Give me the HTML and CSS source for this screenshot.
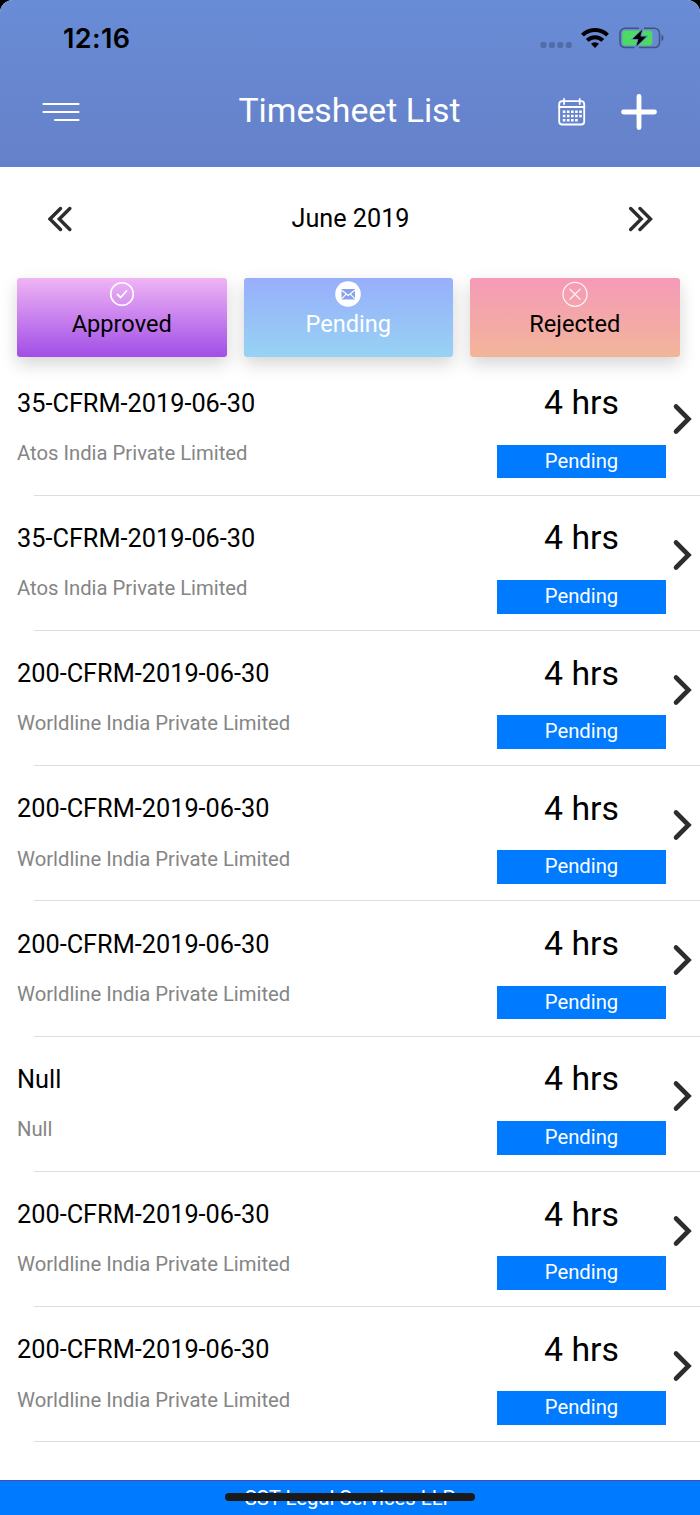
FILE: index.html
```html
<!DOCTYPE html>
<html lang="en">
<head>
    <meta charset="UTF-8">
    <meta name="viewport" content="width=device-width, initial-scale=1.0">
    <title>Timesheet List</title>
    <link rel="stylesheet" href="styles.css">
</head>
<body>

<div class="screen">
    <header class="header">
        <div class="status-bar">
            <span class="time">12:16</span>
            <div class="status-icons">
                <svg class="signal" width="32" height="6" viewBox="0 0 32 6">
                    <rect x="0.5" width="6" height="6" rx="2"/>
                    <rect x="9" width="6" height="6" rx="2"/>
                    <rect x="17.3" width="6" height="6" rx="2"/>
                    <rect x="25.8" width="6" height="6" rx="2"/>
                </svg>
                <svg class="wifi" width="28" height="20" viewBox="0 0 28 20">
                    <path d="M1.500 7.200a17.600 17.600 0 0 1 25 0" fill="none" stroke="#000" stroke-width="4"/>
                    <path d="M6.200 12.400a11 11 0 0 1 15.600 0" fill="none" stroke="#000" stroke-width="4"/>
                    <path d="M14 20l-4-4.200a5.800 5.800 0 0 1 8 0z"/>
                </svg>
                <svg class="battery" width="45" height="22" viewBox="0 0 45 22">
                    <path d="M20 1.200H6A5 5 0 0 0 1 6.200v9.400a5 5 0 0 0 5 5h9.500M25 1.200h10.500a5 5 0 0 1 5 5v9.400a5 5 0 0 1-5 5H20" fill="none" stroke="#41547f" stroke-width="1.500"/>
                    <path d="M42.500 7.500q2 .8 2 3.400t-2 3.400z" fill="#41547f"/>
                    <rect x="3.300" y="3.500" width="30" height="15" rx="3" fill="#4cd964"/>
                    <path d="M24 1.500L12.500 12.500h6.300L16.500 20.700l12-11.600h-6.600z" stroke="#6888d1" stroke-width="1"/>
                </svg>
            </div>
        </div>
        <div class="nav-bar">
            <svg class="menu" width="38" height="20" viewBox="0 0 38 20">
                <path d="M1.500 2h35M1.500 10h35M13 18h23.500" fill="none" stroke="#fff" stroke-width="2.200" stroke-linecap="round"/>
            </svg>
            <h1 class="title">Timesheet List</h1>
            <div class="actions">
                <svg class="calendar" width="28" height="28" viewBox="0 0 28 28">
                    <rect x="1.200" y="3.200" width="25" height="23.300" rx="3" fill="none" stroke="#fff" stroke-width="1.800"/>
                    <path d="M1 9h25.500M6 1v5M21.700 1v5" fill="none" stroke="#fff" stroke-width="1.800" stroke-linecap="round"/>
                    <path d="M4.800 13.800h19M4.800 18h19M4.800 22.200h15" fill="none" stroke="#fff" stroke-width="2.600" stroke-dasharray="2.600 1.500"/>
                </svg>
                <svg class="plus" width="36" height="36" viewBox="0 0 36 36">
                    <path d="M18 2.500v31M2.500 18h31" fill="none" stroke="#fff" stroke-width="4.800" stroke-linecap="round"/>
                </svg>
            </div>
        </div>
    </header>

    <div class="month">
        <svg width="24" height="26" viewBox="0 0 24 26">
            <path d="M12.500 2.500L2 13l10.500 10.500M21.800 2.500L11.300 13l10.500 10.500"/>
        </svg>
        <span class="month-name">June 2019</span>
        <svg width="24" height="26" viewBox="0 0 24 26">
            <path d="M1.700 2.500L12.200 13 1.700 23.500M11 2.500L21.500 13 11 23.500"/>
        </svg>
    </div>

    <div class="tabs">
        <div class="tab approved">
            <svg width="26" height="26" viewBox="0 0 26 26" fill="none" stroke="#fff" stroke-linecap="round">
                <circle cx="13" cy="13" r="11.300" stroke-width="1.600"/>
                <path d="M8.500 13.500l3 3 6-6.500" stroke-width="1.800"/>
            </svg>
            <span>Approved</span>
        </div>
        <div class="tab pending">
            <svg width="26" height="26" viewBox="0 0 26 26">
                <circle cx="13" cy="13" r="12.800" fill="#fff"/>
                <rect x="6.500" y="8" width="13.500" height="10.500" fill="#87a2e8"/>
                <path d="M6.500 9l6.700 5.500L20 9M6.500 17.800l4.500-4.500M20 17.800l-4.500-4.500" fill="none" stroke="#fff" stroke-width="1.100"/>
            </svg>
            <span>Pending</span>
        </div>
        <div class="tab rejected">
            <svg width="26" height="26" viewBox="0 0 26 26" fill="none" stroke="#fff" stroke-opacity=".85" stroke-width="1.300" stroke-linecap="round">
                <circle cx="13" cy="13.300" r="12"/>
                <path d="M8 8.300l10 10M18 8.300l-10 10"/>
            </svg>
            <span>Rejected</span>
        </div>
    </div>

    <div class="list" id="list"></div>

    <footer class="footer">
        <span>SST Legal Services LLP</span>
        <div class="home-indicator"></div>
    </footer>
</div>

<script>
const atos = 'Atos India Private Limited';
const worldline = 'Worldline India Private Limited';

const timesheets = [
    ['35-CFRM-2019-06-30', atos],
    ['35-CFRM-2019-06-30', atos],
    ['200-CFRM-2019-06-30', worldline],
    ['200-CFRM-2019-06-30', worldline],
    ['200-CFRM-2019-06-30', worldline],
    ['Null', 'Null'],
    ['200-CFRM-2019-06-30', worldline],
    ['200-CFRM-2019-06-30', worldline]
];

document.getElementById('list').innerHTML = timesheets.map(([code, client]) => `
    <div class="item">
        <div class="row">
            <div class="info">
                <div class="code">${code}</div>
                <div class="client">${client}</div>
            </div>
            <div class="hours">
                <div class="amount">4 hrs</div>
                <div class="badge">Pending</div>
            </div>
            <svg class="chevron" width="20" height="32" viewBox="0 0 20 32">
                <path d="M4 3.500L16.500 16 4 28.500"/>
            </svg>
        </div>
        <div class="divider"></div>
    </div>`).join('');
</script>

</body>
</html>
```

FILE: styles.css
```css
* {
    box-sizing: border-box;
}

body {
    margin: 0;
    background: #000;
    font-family: Roboto, "Liberation Sans", sans-serif;
    color: #000;
}

.screen {
    display: flex;
    flex-direction: column;
    height: 1515px;
    overflow: hidden;
    background: #fff;
}

/* Header */
.header {
    flex: none;
    height: 167px;
    background: linear-gradient(#698cd6, #6581c9);
    border-radius: 13px 13px 0 0;
    box-shadow: 0 -20px 0 #000;
}

.status-bar {
    display: flex;
    justify-content: space-between;
    height: 76px;
    padding: 0 36px 0 63px;
    align-items: center;
}

.time {
    padding-top: 1px;
    font-family: Inter, sans-serif;
    font-size: 27px;
    font-weight: 600;
    letter-spacing: 0.4px;
}

.status-icons {
    display: flex;
    align-items: center;
}

.signal {
    margin-top: 14px;
    fill: #526ca8;
}

.wifi {
    margin-left: 9px;
}

.battery {
    margin-left: 10px;
}

.nav-bar {
    display: grid;
    grid-template-columns: 1fr auto 1fr;
    align-items: center;
    height: 72px;
    padding: 0 43px 0 42px;
}

.title {
    margin: 0;
    padding-bottom: 2px;
    font-size: 33.8px;
    font-weight: 400;
    line-height: 40px;
    color: #fff;
}

.actions {
    display: flex;
    justify-content: flex-end;
    align-items: center;
    gap: 35px;
}

/* Month picker */
.month {
    flex: none;
    display: flex;
    justify-content: space-between;
    align-items: center;
    height: 103px;
    padding: 0 47px 0 48px;
    font-size: 25.2px;
}

.month path,
.chevron path {
    fill: none;
    stroke: #2d2d2d;
    stroke-width: 3.4;
    stroke-linecap: round;
}

/* Status tabs */
.tabs {
    flex: none;
    display: grid;
    grid-template-columns: repeat(3, 1fr);
    gap: 17px;
    margin-top: 7.5px;
    padding: 0 20.5px 0 17px;
}

.tab {
    display: flex;
    flex-direction: column;
    align-items: center;
    height: 79px;
    padding-top: 3.5px;
    border-radius: 3px;
    font-size: 23.6px;
    line-height: 35px;
    box-shadow: 0 7px 17px rgba(0, 0, 0, 0.17);
}

.approved {
    background: linear-gradient(#efb4f4, #a14ee6);
}

.pending {
    background: linear-gradient(#98aefb, #97d3f4);
    color: #fff;
}

.rejected {
    background: linear-gradient(#f59ab8, #f2b599);
}

/* Timesheet rows */
.list {
    flex: 1;
    padding-top: 3.75px;
}

.item {
    height: 135.25px;
}

.row {
    display: flex;
    height: 134.25px;
    padding: 0 8px 0 17px;
}

.info {
    flex: 1;
}

.code {
    margin-top: 27.25px;
    font-size: 25.3px;
    line-height: 32px;
}

.client {
    margin-top: 19.25px;
    font-size: 20.25px;
    line-height: 28px;
    color: #858585;
}

.hours {
    width: 169px;
    text-align: center;
}

.amount {
    margin-top: 22.75px;
    font-size: 33.8px;
    line-height: 40px;
}

.badge {
    margin-top: 21.5px;
    height: 33.75px;
    font-size: 20.25px;
    line-height: 33.75px;
    color: #fff;
    background: #007aff;
}

.chevron {
    margin: 43px 0 0 6px;
}

.chevron path {
    stroke-width: 4.6;
}

.divider {
    height: 1px;
    margin-left: 34px;
    background: #dedede;
}

/* Footer */
.footer {
    flex: none;
    position: relative;
    height: 35px;
    border-top: 1px solid #4e4baf;
    background: #007aff;
    color: #fff;
    font-size: 20.25px;
    line-height: 34px;
    text-align: center;
}

.home-indicator {
    position: absolute;
    top: 12px;
    left: 225px;
    width: 250px;
    height: 8px;
    border-radius: 4px;
    background: #1a1a1a;
}
```
